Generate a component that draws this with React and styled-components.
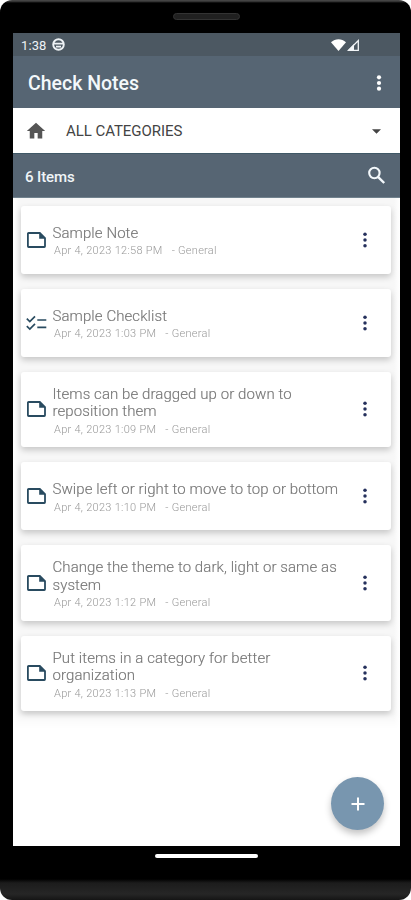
import styled, { createGlobalStyle } from "styled-components"

const GlobalStyle = createGlobalStyle`
    body {
        margin: 0;
        background: #fff;
        font-family: Roboto, "Liberation Sans", sans-serif;
    }
    svg {
        display: block;
        flex: none;
    }
`

const Phone = styled.div`
    width: 411px;
    height: 900px;
    box-sizing: border-box;
    padding: 0 11px 0 13px;
    display: flex;
    flex-direction: column;
    overflow: hidden;
    border-radius: 12px;
    background: linear-gradient(#444 0, #444 1px, #000 3px, #000 879px, #1c1c1c 883px, #262626 894px, #151515 900px);
`
const Speaker = styled.div`
    width: 67px;
    height: 7px;
    box-sizing: border-box;
    margin: 13px auto;
    flex: none;
    border: 1px solid #333;
    border-radius: 4px;
    background: #202020;
`
const Screen = styled.div`
    height: 813px;
    flex: none;
    display: flex;
    flex-direction: column;
    background: #fff;
`
const StatusBar = styled.div`
    height: 23px;
    box-sizing: border-box;
    padding: 0 41px 0 8px;
    display: flex;
    align-items: center;
    background: #4c5862;
    color: #eef2f5;
    font-size: 13px;
`
const StatusIcons = styled.div`
    margin-left: auto;
    display: flex;
    align-items: center;
    gap: 1px;
`
const Clock = styled.span`
    width: 31px;
    padding-top: 1px;
    letter-spacing: 0.1px;
`
const AppBar = styled.div`
    height: 52px;
    box-sizing: border-box;
    padding: 2px 18.5px 0 15px;
    display: flex;
    align-items: center;
    justify-content: space-between;
    background: #566573;
`
const Title = styled.h1`
    margin: 0;
    color: #f3f8fb;
    font-size: 19.5px;
    font-weight: 500;
    letter-spacing: 0;
`
const CategoryBar = styled.div`
    height: 45px;
    box-sizing: border-box;
    padding: 1px 19px 0 13px;
    display: flex;
    align-items: center;
`
const Category = styled.span`
    flex: 1;
    margin-left: 20px;
    color: #444;
    font-size: 15px;
    letter-spacing: -0.05px;
`
const CountBar = styled.div`
    height: 45px;
    box-sizing: border-box;
    padding: 0 14px 0 12px;
    display: flex;
    align-items: center;
    justify-content: space-between;
    border-top: 1px solid #3f5866;
    border-bottom: 1px solid #71828e;
    background: #566573;
`
const Count = styled.span`
    color: #f0f5f8;
    padding-top: 2px;
    font-size: 15px;
    font-weight: 500;
    letter-spacing: -0.1px;
`
const List = styled.div`
    padding: 8px 9px 18px 8px;
    display: flex;
    flex-direction: column;
    gap: 15px;
    background: linear-gradient(90deg, #fff 0, #f7f7f7 6px, #f7f7f7 381px, #fff 387px);
    mask-image: linear-gradient(#000 calc(100% - 15px), transparent);
`
const Card = styled.div`
    height: ${(props) => (props.$tall ? 75.6 : 67.8)}px;
    box-sizing: border-box;
    padding: 0 23px 0 5px;
    display: flex;
    align-items: center;
    border-radius: 3px;
    background: #fff;
    box-shadow: 0 3px 6px rgba(0, 0, 0, 0.2);
`
const CardText = styled.div`
    flex: 1;
    margin-left: 5.5px;
    padding-top: 5px;
`
const CardTitle = styled.div`
    width: 292px;
    color: #777;
    font-size: 15px;
    font-weight: 300;
    line-height: 17.5px;
    letter-spacing: 0.08px;
    -webkit-text-stroke: 0.15px #777;
`
const Meta = styled.div`
    padding-left: 1.5px;
    display: flex;
    gap: 9px;
    color: #999;
    font-size: 11px;
    font-weight: 300;
    line-height: 17.5px;
    letter-spacing: 0.28px;
`
const Footer = styled.div`
    flex: 1;
    display: flex;
    justify-content: center;
`
const HomePill = styled.div`
    width: 103px;
    height: 4px;
    margin-top: 8px;
    border-radius: 2px;
    background: #fff;
`
const AddButton = styled.button`
    position: absolute;
    left: 331px;
    top: 777px;
    width: 53px;
    height: 53px;
    padding: 0;
    border: none;
    border-radius: 50%;
    display: flex;
    align-items: center;
    justify-content: center;
    background: #7896af;
    box-shadow: 0 4px 7px rgba(0, 0, 0, 0.24);
`

const items = [
  { type: "note", title: "Sample Note", date: "Apr 4, 2023 12:58 PM" },
  { type: "checklist", title: "Sample Checklist", date: "Apr 4, 2023 1:03 PM" },
  { type: "note", title: "Items can be dragged up or down to reposition them", date: "Apr 4, 2023 1:09 PM", tall: true },
  { type: "note", title: "Swipe left or right to move to top or bottom", date: "Apr 4, 2023 1:10 PM" },
  { type: "note", title: "Change the theme to dark, light or same as system", date: "Apr 4, 2023 1:12 PM", tall: true },
  { type: "note", title: "Put items in a category for better organization", date: "Apr 4, 2023 1:13 PM", tall: true },
]

const NoteIcon = () => (
  <svg width="21" height="18" viewBox="0 0 21 18">
    <path d="M2.6 2h11.2l5.2 5.2v8.1a.7.7 0 0 1-.7.7H2.6a.7.7 0 0 1-.7-.7V2.7a.7.7 0 0 1 .7-.7z" fill="none" stroke="#294b60" strokeWidth="1.8" />
    <path d="M13.2 1.6v6.2h6.2z" fill="#294b60" />
  </svg>
)

const ChecklistIcon = () => (
  <svg width="21" height="18" viewBox="0 0 21 18" fill="none" stroke="#294b60" strokeWidth="1.7">
    <path d="M.8 4.7l3 2.8L9 2.4M.8 12.2l3 2.8L9 9.9" />
    <path d="M11.3 6h9M11.3 13.4h9" />
  </svg>
)

const Dots = ({ color, size = 1.75 }) => (
  <svg width="6" height="18" viewBox="0 0 6 18" fill={color}>
    <circle cx="3" cy="3.3" r={size} />
    <circle cx="3" cy="9" r={size} />
    <circle cx="3" cy="14.7" r={size} />
  </svg>
)

const App = () => {
  return (
    <Phone>
      <GlobalStyle />
      <Speaker />
      <Screen>
        <StatusBar>
          <Clock>1:38</Clock>
          <svg width="13" height="13" viewBox="0 0 13 13" fill="none" stroke="#eef2f5" strokeWidth="1.9">
            <circle cx="6.5" cy="6.5" r="5.3" />
            <path d="M1.2 5.6h10.6M4 8.6h5" strokeWidth="1.6" />
          </svg>
          <StatusIcons>
            <svg width="15" height="12" viewBox="0 0 15 12" fill="#fff">
              <path d="M7.5 12L0 3.2C4.4-.9 10.6-.9 15 3.2z" />
            </svg>
            <svg width="12" height="12" viewBox="0 0 12 12">
              <path d="M1.6 11.3h9.7V1.6z" fill="none" stroke="#f2f5f7" strokeWidth="1.3" />
              <path d="M.5 11.5L7 5v6.5z" fill="#f2f5f7" />
            </svg>
          </StatusIcons>
        </StatusBar>
        <AppBar>
          <Title>Check Notes</Title>
          <Dots color="#fff" size={2.1} />
        </AppBar>
        <CategoryBar>
          <svg width="20" height="20" viewBox="0 0 24 24" fill="#555">
            <path d="M10 21v-6.5h4V21h5.5v-9H23L12 2 1 12h3.5v9z" />
          </svg>
          <Category>ALL CATEGORIES</Category>
          <svg width="9" height="5" viewBox="0 0 9 5" fill="#444">
            <path d="M0 .2h9L4.5 4.8z" />
          </svg>
        </CategoryBar>
        <CountBar>
          <Count>6 Items</Count>
          <svg width="19" height="19" viewBox="0 0 19 19" fill="none" stroke="#f3f8fb" strokeWidth="2.1">
            <circle cx="7.4" cy="7" r="5.2" />
            <path d="M11 10.8l6.2 6.2" strokeWidth="2.4" />
          </svg>
        </CountBar>
        <List>
          {items.map((item) => (
            <Card key={item.date} $tall={item.tall}>
              {item.type === "note" ? <NoteIcon /> : <ChecklistIcon />}
              <CardText>
                <CardTitle>{item.title}</CardTitle>
                <Meta>
                  <span>{item.date}</span>
                  <span>- General</span>
                </Meta>
              </CardText>
              <Dots color="#25305c" />
            </Card>
          ))}
        </List>
      </Screen>
      <Footer>
        <HomePill />
      </Footer>
      <AddButton>
        <svg width="14" height="14" viewBox="0 0 14 14" stroke="#fff" strokeWidth="2">
          <path d="M7 .5v13M.5 7h13" />
        </svg>
      </AddButton>
    </Phone>
  )
}

export default App
